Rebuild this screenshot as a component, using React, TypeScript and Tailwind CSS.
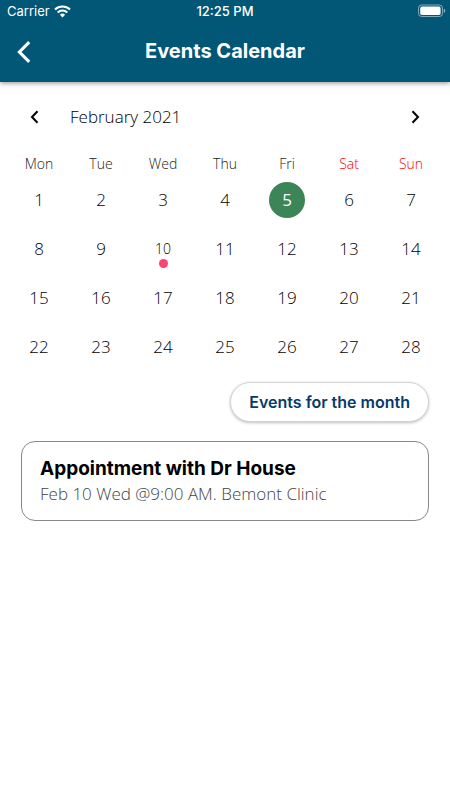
const weekdays = ['Mon', 'Tue', 'Wed', 'Thu', 'Fri', 'Sat', 'Sun'];
const weeks = [0, 1, 2, 3].map((w) => weekdays.map((_, d) => w * 7 + d + 1));
const selectedDay = 5;
const eventDay = 10;

function StatusBar() {
  return (
    <div className="grid h-[22px] grid-cols-3 items-center px-[7px] font-['Inter',sans-serif] text-[13px] leading-4">
      <div className="flex items-center gap-1">
        <span>Carrier</span>
        <svg width="17" height="13" viewBox="0 0 17 13" aria-hidden="true">
          <g fill="none" stroke="white" strokeWidth="2.1">
            <path d="M1 4.6a10.8 10.8 0 0 1 15 0" />
            <path d="M3.7 7.4a6.9 6.9 0 0 1 9.6 0" />
          </g>
          <path d="M5.9 9.7a3.8 3.8 0 0 1 5.2 0L8.5 12.4z" fill="white" />
        </svg>
      </div>
      <span className="text-center font-medium">12:25 PM</span>
      <svg className="-mr-[3px] justify-self-end" width="28" height="14" viewBox="0 0 28 14" aria-hidden="true">
        <rect x="0.5" y="1" width="24" height="11.5" rx="3.2" fill="none" stroke="white" strokeOpacity="0.5" />
        <rect x="2.2" y="2.6" width="20.4" height="8.4" rx="1.8" fill="white" />
        <path d="M25.8 4.8v4c1.1-.4 1.5-1.1 1.5-2s-.4-1.6-1.5-2z" fill="white" fillOpacity="0.55" />
      </svg>
    </div>
  );
}

function Day({ day }: { day: number }) {
  if (day === selectedDay) {
    return (
      <button aria-pressed="true" className="flex size-9 items-center justify-center rounded-full bg-[#3c8557] font-normal text-white">
        {day}
      </button>
    );
  }
  if (day === eventDay) {
    return (
      <button className="flex h-[38px] w-9 flex-col items-center justify-end gap-0.5 font-light">
        <span className="text-sm leading-4">{day}</span>
        <span className="size-[9px] rounded-full bg-[#fb4570]" />
      </button>
    );
  }
  return <button className="flex size-9 items-center justify-center">{day}</button>;
}

export default function App() {
  return (
    <div className="min-h-screen bg-white font-['Open_Sans','Noto_Sans',sans-serif] text-black">
      <header className="bg-[#025777] text-white shadow-[0_1px_5px_rgba(0,0,0,0.45)]">
        <StatusBar />
        <div className="grid h-[60px] grid-cols-[48px_1fr_48px] items-start pt-[14px]">
          <button aria-label="Back" className="flex h-8 items-center pl-4">
            <svg width="16" height="24" viewBox="0 0 16 24" aria-hidden="true">
              <path d="M13.2 2.2 3.4 12l9.8 9.8" fill="none" stroke="white" strokeWidth="3.1" />
            </svg>
          </button>
          <h1 className="text-center font-['Inter',sans-serif] text-xl leading-[30px] font-bold">Events Calendar</h1>
        </div>
      </header>

      <main>
        <section aria-label="Calendar" className="px-2">
          <div className="flex h-[70px] items-center px-[21px]">
            <button aria-label="Previous month" className="flex h-8 w-[41px] items-center">
              <svg width="12" height="14" viewBox="0 0 12 14" aria-hidden="true">
                <path d="M8.5 1.3 3 7l5.500 5.700" fill="none" stroke="black" strokeWidth="2" />
              </svg>
            </button>
            <h2 className="grow text-[17px] font-light">February 2021</h2>
            <button aria-label="Next month" className="flex h-8 items-center">
              <svg width="12" height="14" viewBox="0 0 12 14" aria-hidden="true">
                <path d="m3.500 1.300 5.500 5.700-5.500 5.700" fill="none" stroke="black" strokeWidth="2" />
              </svg>
            </button>
          </div>
          <table className="w-full table-fixed border-collapse text-center">
            <thead>
              <tr className="h-[23px] text-sm leading-[23px]">
                {weekdays.map((name, i) => (
                  <th key={name} scope="col" className={i > 4 ? 'p-0 font-light text-[#f00]' : 'p-0 font-light text-[#222]'}>
                    {name}
                  </th>
                ))}
              </tr>
            </thead>
            <tbody>
              {weeks.map((week) => (
                <tr key={week[0]} className="h-[49px] text-[17px] font-light">
                  {week.map((day) => (
                    <td key={day} className="p-0">
                      <div className="flex justify-center">
                        <Day day={day} />
                      </div>
                    </td>
                  ))}
                </tr>
              ))}
            </tbody>
          </table>
        </section>

        <section aria-label="Events" className="flex flex-col gap-[19px] px-[21px] pt-[11px]">
          <button className="h-10 self-end rounded-full border border-[#d4d4d4] bg-white px-[18px] font-['Inter',sans-serif] text-base font-semibold text-[#063a69] shadow-[0_1px_3px_rgba(0,0,0,0.25)]">
            Events for the month
          </button>
          <article className="min-h-20 rounded-[14px] border border-[#888] px-[18px] py-[13px]">
            <h3 className="font-['Inter',sans-serif] text-[19px] leading-7 font-bold">Appointment with Dr House</h3>
            <p className="text-[17px] leading-[22px] font-light text-[#444]">Feb 10 Wed @9:00 AM. Bemont Clinic</p>
          </article>
        </section>
      </main>
    </div>
  );
}
